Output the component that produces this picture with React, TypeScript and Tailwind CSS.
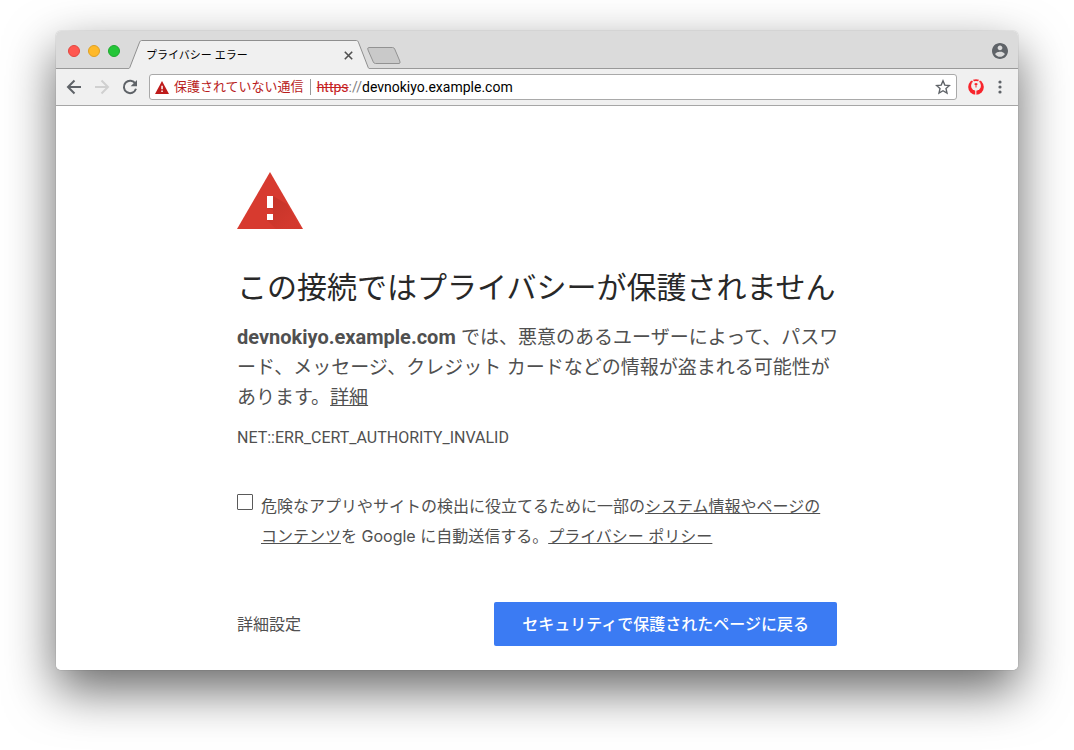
import React from "react";

function WindowControls() {
  return (
    <div className="flex h-full items-center gap-2 pl-3 pt-[3px]">
      <button aria-label="閉じる" className="size-3 rounded-full border border-[#e2463f] bg-[#ff5750]" />
      <button aria-label="しまう" className="size-3 rounded-full border border-[#dfa023] bg-[#ffb929]" />
      <button aria-label="拡大" className="size-3 rounded-full border border-[#1fa82f] bg-[#24c638]" />
    </div>
  );
}

function Tab() {
  return (
    <div className="-mb-px flex h-[29px]">
      <svg width="14" height="29" viewBox="0 0 14 29" aria-hidden="true">
        <path d="M0 28.5H.5C1.3 28.5 1.7 27.8 2 27L11.6 2.2C12 1.2 12.6 .5 13.6 .5H14V29H0Z" fill="#f0f0f0" />
        <path d="M0 28.5H.5C1.3 28.5 1.7 27.8 2 27L11.6 2.2C12 1.2 12.6 .5 13.6 .5H14" fill="none" stroke="#8f8f8f" />
      </svg>
      <div className="flex w-[214px] items-center justify-between border-t border-[#8f8f8f] bg-[#f0f0f0] pl-1 pr-0.5">
        <span className="text-[11px] text-black">プライバシー エラー</span>
        <button aria-label="タブを閉じる" className="flex size-3 items-center justify-center">
          <svg width="9" height="9" viewBox="0 0 9 9" stroke="#505050" strokeWidth="1.6">
            <path d="M.8 .8l7.4 7.4M8.2 .8L.8 8.2" />
          </svg>
        </button>
      </div>
      <svg width="14" height="29" viewBox="0 0 14 29" aria-hidden="true">
        <path d="M14 28.5H13.5C12.7 28.5 12.3 27.8 12 27L2.4 2.2C2 1.2 1.4 .5 .4 .5H0V29H14Z" fill="#f0f0f0" />
        <path d="M14 28.5H13.5C12.7 28.5 12.3 27.8 12 27L2.4 2.2C2 1.2 1.4 .5 .4 .5H0" fill="none" stroke="#8f8f8f" />
      </svg>
    </div>
  );
}

function TabStrip() {
  return (
    <div className="flex h-[38px] items-end border-b border-[#999] bg-[#dbdbdb]">
      <WindowControls />
      <div className="ml-2 flex">
        <Tab />
        <button aria-label="新しいタブ" className="-ml-[3px] self-end pb-1">
          <svg width="34" height="17" viewBox="0 0 34 17" className="block">
            <path d="M2 .5H25.5Q27 .5 27.7 2L32.8 14Q33.7 16.5 32 16.5H8.5Q7 16.5 6.3 15L1 3Q0 .5 2 .5Z" fill="#c9c9c9" stroke="#929292" />
          </svg>
        </button>
      </div>
      <button aria-label="ユーザー" className="mb-[9px] ml-auto mr-2.5">
        <svg width="16" height="16" viewBox="2 2 20 20" fill="#5f6368" className="block">
          <path d="M12 2C6.48 2 2 6.48 2 12s4.48 10 10 10 10-4.48 10-10S17.52 2 12 2zm0 3c1.66 0 3 1.34 3 3s-1.34 3-3 3-3-1.34-3-3 1.34-3 3-3zm0 14.2c-2.5 0-4.71-1.28-6-3.22.03-1.99 4-3.08 6-3.08 1.99 0 5.97 1.09 6 3.08-1.29 1.94-3.5 3.22-6 3.22z" />
        </svg>
      </button>
    </div>
  );
}

function Toolbar() {
  return (
    <div className="flex h-[37px] items-center border-b border-[#a6a6a6] bg-[#f0f0f0] pl-2">
      <div className="flex gap-2">
        <button aria-label="戻る" className="flex size-5 items-center justify-center">
          <svg width="20" height="20" viewBox="0 0 20 20" fill="none" stroke="#5f6368" strokeWidth="2">
            <path d="M17 10H4.5M10.5 3.5L4 10l6.5 6.5" />
          </svg>
        </button>
        <button aria-label="進む" className="flex size-5 items-center justify-center">
          <svg width="20" height="20" viewBox="0 0 20 20" fill="none" stroke="#d0d0d0" strokeWidth="2">
            <path d="M3 10h12.5M9.5 3.5L16 10l-6.5 6.5" />
          </svg>
        </button>
        <button aria-label="再読み込み" className="flex size-5 items-center justify-center">
          <svg width="20" height="20" viewBox="0 0 20 20">
            <path d="M15.4 6.7A6.2 6.2 0 1 0 16 11.8" fill="none" stroke="#5f6368" strokeWidth="2" />
            <path d="M17 2.9V9.3H10.6Z" fill="#5f6368" />
          </svg>
        </button>
      </div>
      <div className="ml-[9px] flex h-[26px] min-w-0 flex-1 items-center rounded-[3px] border border-[#a9a9a9] bg-white px-[5px]">
        <svg width="14" height="13" viewBox="0 0 14 13" aria-hidden="true">
          <path d="M7 0L14 13H0Z" fill="#be1b1b" />
          <path d="M6.3 4.8h1.5v3.4H6.3zM6.3 9.5h1.5V11H6.3z" fill="#fff" />
        </svg>
        <span className="ml-[5px] whitespace-nowrap text-[13px] text-[#b91c1c]">保護されていない通信</span>
        <span className="mx-1.5 h-4 w-px bg-[#999]" />
        <div className="min-w-0 flex-1 whitespace-nowrap font-['Roboto',sans-serif] text-sm text-black">
          <span className="text-[#c5221f] line-through">https</span>
          <span className="text-[#808080]">://</span>
          devnokiyo.example.com
        </div>
        <button aria-label="ブックマーク">
          <svg width="16" height="16" viewBox="0 0 16 16" fill="none" stroke="#5f6368" strokeWidth="1.4" className="block">
            <path d="M8 1.8L9.8 6.1 14.5 6.5 11 9.6 12 14.1 8 11.7 4 14.1 5 9.6 1.5 6.5 6.2 6.1Z" />
          </svg>
        </button>
      </div>
      <button aria-label="拡張機能" className="ml-[11px]">
        <svg width="16" height="16" viewBox="0 0 16 16" className="block">
          <circle cx="8" cy="8" r="7.8" fill="#f8242c" />
          <circle cx="8" cy="6.8" r="4.9" fill="#f0f0f0" />
          <path d="M4 .2L5.8 3.2M12 .2L10.2 3.2M7.8 10V16" stroke="#f0f0f0" strokeWidth="1.2" />
          <path d="M6.6 4.4Q8 3.6 9.4 4.4V6H8.5V8.6H7.5V6H6.6Z" fill="#f8242c" />
        </svg>
      </button>
      <button aria-label="メニュー" className="ml-2 mr-2.5">
        <svg width="16" height="16" viewBox="0 0 16 16" fill="#5f6368" className="block">
          <circle cx="8" cy="3" r="1.6" />
          <circle cx="8" cy="8" r="1.6" />
          <circle cx="8" cy="13" r="1.6" />
        </svg>
      </button>
    </div>
  );
}

function WarningIcon() {
  return (
    <svg width="66" height="57" viewBox="0 0 66 57" className="block" aria-hidden="true">
      <defs>
        <linearGradient id="shade" gradientUnits="userSpaceOnUse" x1="34" y1="28" x2="54" y2="50">
          <stop offset="0" stopColor="#b82f25" />
          <stop offset="1" stopColor="#d0382d" />
        </linearGradient>
      </defs>
      <path d="M33 0L66 57H0Z" fill="#d73a2f" />
      <path d="M36 24L50 32L64 57H39L30 48L36 42V38L30 36Z" fill="url(#shade)" opacity=".6" />
      <path d="M30 24h6v12h-6zM30 42h6v6h-6z" fill="#fff" />
    </svg>
  );
}

export default function App() {
  return (
    <div
      lang="ja"
      className="min-h-screen bg-white px-14 pb-20 pt-[31px] font-['Inter','Noto_Sans_CJK_JP',sans-serif]"
    >
      <div className="rounded-[5px] shadow-[0_0_1px_rgba(0,0,0,0.5),0_20px_50px_rgba(0,0,0,0.6)]">
        <div className="overflow-hidden rounded-[5px] bg-white">
          <TabStrip />
          <Toolbar />
          <main className="mx-auto max-w-[600px] pb-6 pt-[66px] text-[#505050]">
            <WarningIcon />
            <h1 className="mt-10 whitespace-nowrap text-[30px] leading-9 text-[#282828]">
              この接続ではプライバシーが保護されません
            </h1>
            <p className="mt-[17px] whitespace-nowrap text-[19px] leading-[30px]">
              <strong className="font-['Roboto',sans-serif] text-xl leading-[30px]">devnokiyo.example.com</strong> では、悪意のあるユーザーによって、パスワ
              <br />
              ード、メッセージ、クレジット カードなどの情報が盗まれる可能性が
              <br />
              あります。
              <a href="#details" className="underline">詳細</a>
            </p>
            <p className="mt-2.5 font-['Roboto',sans-serif] text-base leading-[30px]">NET::ERR_CERT_AUTHORITY_INVALID</p>
            <div className="mt-[38px] flex gap-2">
              <input
                id="report"
                type="checkbox"
                className="mt-[3px] size-4 shrink-0 appearance-none rounded-[1px] border border-[#5a5a5a] bg-white checked:bg-[#3b7bf3]"
              />
              <label htmlFor="report" className="whitespace-nowrap text-base leading-[30px]">
                <span className="block">
                  危険なアプリやサイトの検出に役立てるために一部の
                  <a href="#system" className="underline">システム情報やページの</a>
                </span>
                <span className="block">
                  <a href="#system" className="underline">コンテンツ</a>を Google に自動送信する。
                  <a href="#privacy" className="underline">プライバシー ポリシー</a>
                </span>
              </label>
            </div>
            <div className="mt-[51px] flex items-center justify-between">
              <button className="text-base">詳細設定</button>
              <button className="h-11 rounded-[2px] bg-[#3b7bf3] px-7 text-base font-medium text-white">
                セキュリティで保護されたページに戻る
              </button>
            </div>
          </main>
        </div>
      </div>
    </div>
  );
}
